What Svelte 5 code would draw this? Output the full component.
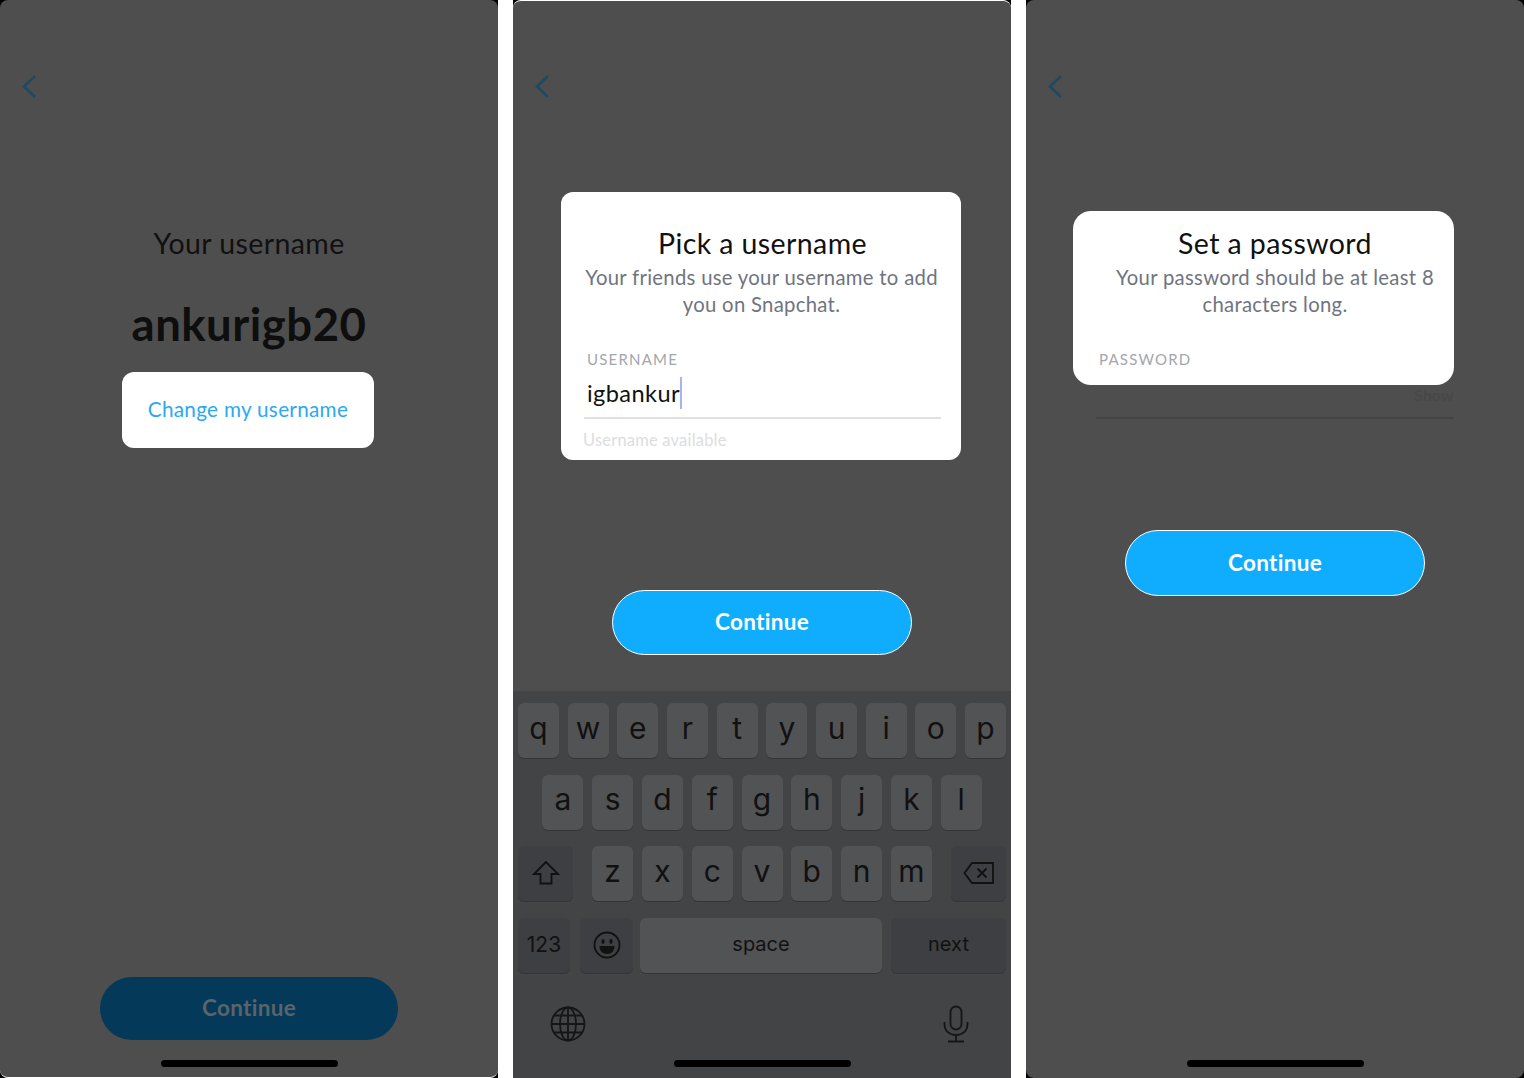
<script>
  const rowOne = ["q", "w", "e", "r", "t", "y", "u", "i", "o", "p"];
  const rowTwo = ["a", "s", "d", "f", "g", "h", "j", "k", "l"];
  const rowThree = ["z", "x", "c", "v", "b", "n", "m"];
</script>

<main class="page">
  <!-- first screen -->
  <div class="frame">
    <section class="phone first">
      <svg class="back" viewBox="0 0 16 24" width="16" height="24">
        <path d="M14 2 L3 12.5 L14 23" />
      </svg>
      <h2 class="your">Your username</h2>
      <p class="name">ankurigb20</p>
      <div class="change">Change my username</div>
      <button class="continue dim">Continue</button>
      <div class="home"></div>
    </section>
  </div>

  <!-- second screen -->
  <div class="frame">
    <section class="phone second">
      <svg class="back" viewBox="0 0 16 24" width="16" height="24">
        <path d="M14 2 L3 12.5 L14 23" />
      </svg>
      <div class="card pick">
        <h2>Pick a username</h2>
        <p class="desc">Your friends use your username to add<br />you on Snapchat.</p>
        <div class="label">USERNAME</div>
        <div class="value">igbankur<span class="caret"></span></div>
        <div class="rule"></div>
        <div class="hint">Username available</div>
      </div>
      <button class="continue next-one">Continue</button>

      <div class="keyboard">
        <div class="row">
          {#each rowOne as k}
            <div class="key">{k}</div>
          {/each}
        </div>
        <div class="row">
          {#each rowTwo as k}
            <div class="key">{k}</div>
          {/each}
        </div>
        <div class="row spread">
          <div class="key dark shift">
            <svg viewBox="0 0 28 26" width="28" height="26">
              <path d="M14 2 L2 14 H8.5 V23.5 H19.5 V14 H26 Z" />
            </svg>
          </div>
          <div class="letters">
            {#each rowThree as k}
              <div class="key">{k}</div>
            {/each}
          </div>
          <div class="key dark shift">
            <svg viewBox="0 0 32 24" width="32" height="24">
              <path d="M9 2 H30 V22 H9 L1.5 12 Z" />
              <path d="M14.5 7.5 L23.5 16.5 M23.5 7.5 L14.5 16.5" />
            </svg>
          </div>
        </div>
        <div class="row bottom">
          <div class="key dark num">123</div>
          <div class="key dark emoji">
            <svg viewBox="0 0 28 28" width="28" height="28">
              <circle cx="14" cy="14" r="12.5" />
              <ellipse class="fill" cx="10" cy="10.5" rx="1.6" ry="2.4" />
              <ellipse class="fill" cx="18" cy="10.5" rx="1.6" ry="2.4" />
              <path class="fill" d="M6.5 15 H21.5 C21.5 20 18.5 23 14 23 C9.5 23 6.5 20 6.5 15 Z" />
            </svg>
          </div>
          <div class="key spacebar">space</div>
          <div class="key dark go">next</div>
        </div>
        <div class="extras">
          <svg viewBox="0 0 36 36" width="36" height="36">
            <circle cx="18" cy="18" r="16.5" />
            <ellipse cx="18" cy="18" rx="8" ry="16.5" />
            <path d="M18 1.5 V34.5 M1.5 18 H34.5 M4 9.5 H32 M4 26.5 H32" />
          </svg>
          <svg viewBox="0 0 28 38" width="28" height="38">
            <rect x="8.5" y="1.5" width="11" height="23" rx="5.5" />
            <path d="M2.5 17 V19 C2.5 26 7.5 30 14 30 C20.5 30 25.5 26 25.5 19 V17 M14 30 V36.5 M6 36.5 H22" />
          </svg>
        </div>
        <div class="home"></div>
      </div>
    </section>
  </div>

  <!-- third screen -->
  <div class="frame">
    <section class="phone">
      <svg class="back" viewBox="0 0 16 24" width="16" height="24">
        <path d="M14 2 L3 12.5 L14 23" />
      </svg>
      <div class="card password">
        <h2>Set a password</h2>
        <p class="desc">Your password should be at least 8<br />characters long.</p>
        <div class="label">PASSWORD</div>
      </div>
      <div class="show">Show</div>
      <div class="under"></div>
      <button class="continue third">Continue</button>
      <div class="home"></div>
    </section>
  </div>
</main>

<style>
  :global(body) {
    margin: 0;
    background: #fff;
  }

  .page {
    display: flex;
    gap: 15px;
    width: 1524px;
    height: 1078px;
    font-family: Lato, "Open Sans", sans-serif;
    color: #111;
  }

  .frame {
    width: 498px;
    height: 1078px;
    background: #000;
  }

  .phone {
    display: flex;
    flex-direction: column;
    height: 100%;
    box-sizing: border-box;
    background: #4e4e4e;
    border-radius: 8px;
    padding-top: 74px;
    overflow: hidden;
  }

  .first {
    border-bottom: 1px solid #fff;
  }

  .first .home {
    margin-bottom: 10px;
  }

  .second {
    border-top: 1px solid #fff;
    padding-top: 73px;
    border-radius: 8px 8px 0 0;
  }

  .back {
    flex: none;
    margin-left: 21px;
    fill: none;
    stroke: #1c4a63;
    stroke-width: 2.6;
  }

  h2 {
    margin: 0;
    font-size: 28.5px;
    font-weight: 400;
    line-height: 32px;
    text-align: center;
    color: #111;
    letter-spacing: 0.4px;
  }

  .your {
    margin-top: 129px;
  }

  .name {
    margin: 37px 0 0;
    font-size: 45.5px;
    font-weight: 700;
    line-height: 56px;
    text-align: center;
    color: #0e0e0e;
    letter-spacing: 0.5px;
  }

  .change {
    margin: 20px 0 0 122px;
    width: 252px;
    height: 76px;
    border-radius: 12px;
    background: #fff;
    color: #2aa9f0;
    font-size: 20.7px;
    line-height: 75px;
    text-align: center;
    letter-spacing: 0.3px;
  }

  .continue {
    display: block;
    align-self: center;
    flex: none;
    width: 300px;
    height: 65px;
    border: 1px solid #fff;
    border-radius: 33px;
    background: #10adff;
    color: #fff;
    font-family: inherit;
    font-size: 22.5px;
    font-weight: 700;
    letter-spacing: 0.3px;
    padding: 0 0 2px;
  }

  .dim {
    margin-top: auto;
    width: 298px;
    height: 63px;
    border: 0;
    background: #04395a;
    color: #5a6469;
  }

  .home {
    flex: none;
    align-self: center;
    width: 177px;
    height: 7px;
    margin: 20px auto 11px;
    border-radius: 4px;
    background: #000;
  }

  .card {
    flex: none;
    box-sizing: border-box;
    background: #fff;
  }

  .pick {
    width: 400px;
    height: 268px;
    margin: 94px 0 0 48px;
    padding: 35px 20px 0 23px;
    border-radius: 12px;
  }

  .password {
    width: 381px;
    height: 174px;
    margin: 113px 0 0 47px;
    padding: 16px 0 0 23px;
    border-radius: 18px;
  }

  .desc {
    margin: 5px 0 0;
    font-size: 20.3px;
    line-height: 27px;
    text-align: center;
    color: #6f7480;
    letter-spacing: 0.3px;
    white-space: nowrap;
  }

  .pick .desc {
    margin-left: -2px;
  }

  .label {
    margin: 33px 0 0 3px;
    font-size: 15px;
    line-height: 16px;
    color: #a3a6ad;
    letter-spacing: 1.2px;
  }

  .password .label {
    margin-left: 3px;
  }

  .value {
    margin: 9px 0 0 3px;
    display: flex;
    align-items: center;
    font-size: 23.6px;
    line-height: 34px;
    letter-spacing: 0.4px;
    color: #111;
  }

  .caret {
    width: 2px;
    height: 32px;
    background: #a9b4ee;
  }

  .rule {
    height: 2px;
    margin-top: 7px;
    background: #dfe0e3;
  }

  .hint {
    margin: 11px 0 0 -1px;
    font-size: 16.5px;
    line-height: 20px;
    color: #dcdde0;
    letter-spacing: 0.2px;
  }

  .next-one {
    margin-top: 130px;
  }

  .show {
    margin: 0;
    padding-left: 388px;
    font-size: 16px;
    font-weight: 700;
    line-height: 20px;
    color: #484848;
  }

  .under {
    flex: none;
    width: 358px;
    height: 2px;
    margin: 12px 0 0 70px;
    background: #444;
  }

  .third {
    margin-top: 111px;
    height: 66px;
  }

  .third + .home {
    margin-top: auto;
  }

  .keyboard {
    display: flex;
    flex-direction: column;
    flex: 1;
    margin-top: 36px;
    padding: 12px 5px 0;
    background: #434446;
    font-family: Inter, "Liberation Sans", sans-serif;
  }

  .row {
    display: flex;
    justify-content: center;
    gap: 8.8px;
    height: 55px;
    margin-bottom: 16.7px;
  }

  .key {
    display: flex;
    align-items: center;
    justify-content: center;
    box-sizing: border-box;
    width: 41px;
    height: 55px;
    padding-bottom: 6px;
    border-radius: 6px;
    background: #525355;
    box-shadow: 0 1px 0 #343537;
    color: #111;
    font-size: 30px;
    font-weight: 400;
  }

  .spread {
    justify-content: space-between;
  }

  .letters {
    display: flex;
    gap: 8.8px;
  }

  .dark {
    background: #3e3f42;
  }

  .shift {
    width: 55px;
    padding-bottom: 2px;
  }

  .shift svg {
    fill: none;
    stroke: #111;
    stroke-width: 1.8;
  }

  .bottom {
    justify-content: flex-start;
    gap: 0;
  }

  .num {
    width: 52px;
    padding-bottom: 2px;
    font-size: 21px;
  }

  .emoji {
    width: 53px;
    margin-left: 10px;
    padding-bottom: 1px;
  }

  .emoji svg {
    fill: none;
    stroke: #111;
    stroke-width: 1.8;
  }

  .emoji .fill {
    fill: #111;
    stroke: none;
  }

  .spacebar {
    width: 242px;
    margin-left: 7px;
    padding-bottom: 4px;
    font-size: 20px;
  }

  .go {
    width: 115px;
    margin-left: 9px;
    padding-bottom: 4px;
    font-size: 20px;
  }

  .extras {
    display: flex;
    justify-content: space-between;
    align-items: center;
    padding: 0 36px 0 32px;
    margin-top: 15px;
  }

  .extras svg {
    fill: none;
    stroke: #151618;
    stroke-width: 1.8;
  }

  .keyboard .home {
    margin-top: auto;
  }
</style>
